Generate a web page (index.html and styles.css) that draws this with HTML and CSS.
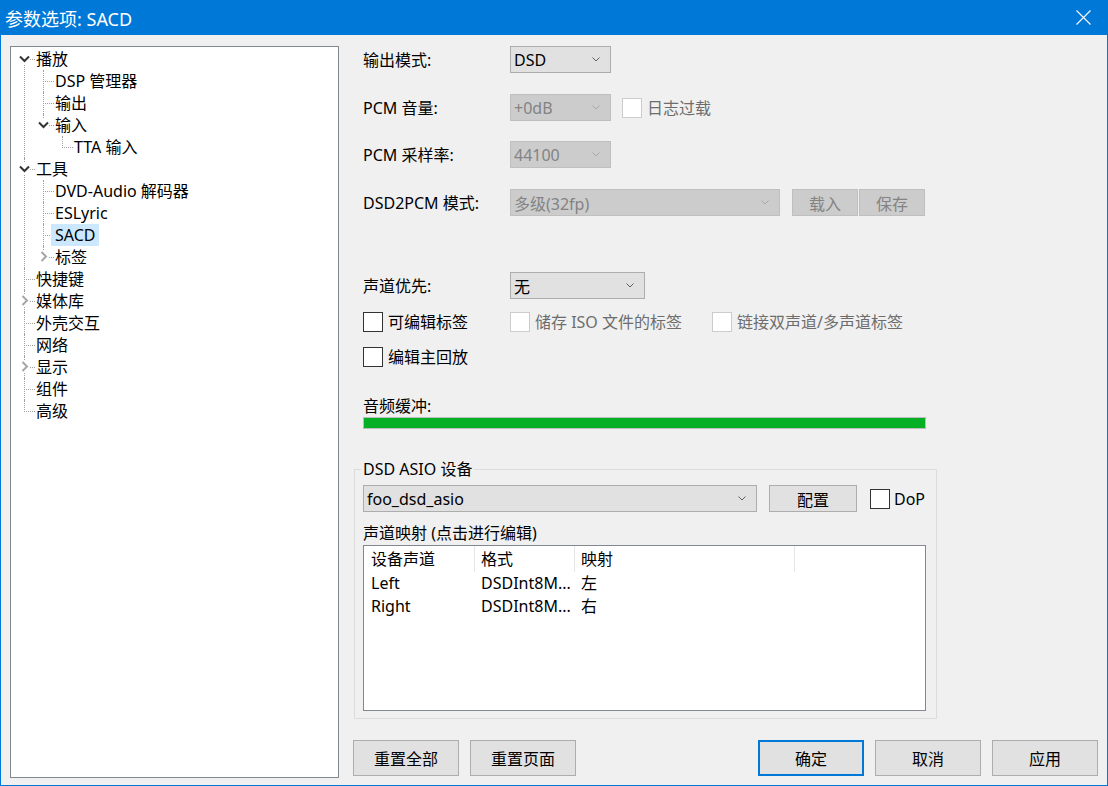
FILE: index.html
```html
<!DOCTYPE html>
<html lang="zh-CN">
  <head>
    <meta charset="UTF-8">
    <title>参数选项: SACD</title>
    <link rel="stylesheet" href="styles.css">
  </head>
  <body>
    <div class="window">
      <div class="titlebar">
        <span class="title">参数选项: SACD</span>
        <svg class="close" width="15" height="15" viewBox="0 0 15 15"><path d="M0.5 0.5L14.5 14.5M14.5 0.5L0.5 14.5" stroke="#fff" stroke-width="1.1"/></svg>
      </div>

      <div class="main">
        <!-- 左侧树 -->
        <div class="tree">
          <ul class="tree-root">
            <li>
              <div class="node"><span class="twisty"><svg width="11" height="11" viewBox="0 0 11 11"><path d="M1 3.5L5.5 8L10 3.5" class="open"/></svg></span><span class="label">播放</span></div>
              <ul>
                <li><div class="node"><span class="label">DSP 管理器</span></div></li>
                <li><div class="node"><span class="label">输出</span></div></li>
                <li>
                  <div class="node"><span class="twisty"><svg width="11" height="11" viewBox="0 0 11 11"><path d="M1 3.5L5.5 8L10 3.5" class="open"/></svg></span><span class="label">输入</span></div>
                  <ul>
                    <li><div class="node"><span class="label">TTA 输入</span></div></li>
                  </ul>
                </li>
              </ul>
            </li>
            <li>
              <div class="node"><span class="twisty"><svg width="11" height="11" viewBox="0 0 11 11"><path d="M1 3.5L5.5 8L10 3.5" class="open"/></svg></span><span class="label">工具</span></div>
              <ul>
                <li><div class="node"><span class="label">DVD-Audio 解码器</span></div></li>
                <li><div class="node"><span class="label">ESLyric</span></div></li>
                <li><div class="node"><span class="label selected">SACD</span></div></li>
                <li><div class="node"><span class="twisty"><svg width="11" height="11" viewBox="0 0 11 11"><path d="M3.5 1L8 5.5L3.5 10" class="closed"/></svg></span><span class="label">标签</span></div></li>
              </ul>
            </li>
            <li><div class="node"><span class="label">快捷键</span></div></li>
            <li><div class="node"><span class="twisty"><svg width="11" height="11" viewBox="0 0 11 11"><path d="M3.5 1L8 5.5L3.5 10" class="closed"/></svg></span><span class="label">媒体库</span></div></li>
            <li><div class="node"><span class="label">外壳交互</span></div></li>
            <li><div class="node"><span class="label">网络</span></div></li>
            <li><div class="node"><span class="twisty"><svg width="11" height="11" viewBox="0 0 11 11"><path d="M3.5 1L8 5.5L3.5 10" class="closed"/></svg></span><span class="label">显示</span></div></li>
            <li><div class="node"><span class="label">组件</span></div></li>
            <li><div class="node"><span class="label">高级</span></div></li>
          </ul>
        </div>

        <!-- 右侧设置页 -->
        <div class="pane">
          <div class="field">
            <span class="field-label">输出模式:</span>
            <div class="combo w-101"><span>DSD</span><svg class="arrow" width="8" height="5" viewBox="0 0 8 5"><path d="M0.5 0.5L4 4L7.5 0.5"/></svg></div>
          </div>
          <div class="field mt-21">
            <span class="field-label">PCM 音量:</span>
            <div class="combo w-101 disabled"><span>+0dB</span><svg class="arrow" width="8" height="5" viewBox="0 0 8 5"><path d="M0.5 0.5L4 4L7.5 0.5"/></svg></div>
            <label class="check disabled ml-11"><span class="box"></span>日志过载</label>
          </div>
          <div class="field mt-20">
            <span class="field-label">PCM 采样率:</span>
            <div class="combo w-101 disabled"><span>44100</span><svg class="arrow" width="8" height="5" viewBox="0 0 8 5"><path d="M0.5 0.5L4 4L7.5 0.5"/></svg></div>
          </div>
          <div class="field mt-21">
            <span class="field-label">DSD2PCM 模式:</span>
            <div class="combo w-270 disabled"><span>多级(32fp)</span><svg class="arrow" width="8" height="5" viewBox="0 0 8 5"><path d="M0.5 0.5L4 4L7.5 0.5"/></svg></div>
            <div class="btn-pair">
              <button class="btn small disabled">载入</button>
              <button class="btn small disabled">保存</button>
            </div>
          </div>

          <div class="field mt-56">
            <span class="field-label">声道优先:</span>
            <div class="combo w-135"><span>无</span><svg class="arrow" width="8" height="5" viewBox="0 0 8 5"><path d="M0.5 0.5L4 4L7.5 0.5"/></svg></div>
          </div>
          <div class="checks mt-13">
            <label class="check w-147"><span class="box"></span>可编辑标签</label>
            <label class="check w-202 disabled"><span class="box"></span>储存 ISO 文件的标签</label>
            <label class="check disabled"><span class="box"></span>链接双声道/多声道标签</label>
          </div>
          <div class="checks mt-15">
            <label class="check"><span class="box"></span>编辑主回放</label>
          </div>

          <div class="caption mt-28">音频缓冲:</div>
          <div class="progress"><div class="progress-fill"></div></div>

          <fieldset class="group">
            <legend>DSD ASIO 设备</legend>
            <div class="asio-row">
              <div class="combo w-394"><span>foo_dsd_asio</span><svg class="arrow" width="8" height="5" viewBox="0 0 8 5"><path d="M0.5 0.5L4 4L7.5 0.5"/></svg></div>
              <button class="btn config">配置</button>
              <label class="check dop"><span class="box"></span>DoP</label>
            </div>
            <div class="map-label">声道映射 (点击进行编辑)</div>
            <div class="list">
              <div class="list-head">
                <span>设备声道</span>
                <span>格式</span>
                <span>映射</span>
                <span></span>
              </div>
              <div class="list-row">
                <span>Left</span>
                <span>DSDInt8M...</span>
                <span>左</span>
              </div>
              <div class="list-row">
                <span>Right</span>
                <span>DSDInt8M...</span>
                <span>右</span>
              </div>
            </div>
          </fieldset>

          <div class="actions">
            <div class="btn-group">
              <button class="btn">重置全部</button>
              <button class="btn">重置页面</button>
            </div>
            <div class="btn-group">
              <button class="btn default">确定</button>
              <button class="btn">取消</button>
              <button class="btn">应用</button>
            </div>
          </div>
        </div>
      </div>
    </div>
  </body>
</html>
```

FILE: styles.css
```css
* {
  margin: 0;
  padding: 0;
  box-sizing: border-box;
}

body {
  width: 1108px;
  height: 786px;
  overflow: hidden;
  background: #f0f0f0;
  font-family: "Noto Sans", "Noto Sans CJK SC", sans-serif;
  font-size: 16px;
  color: #000;
}

.window {
  height: 786px;
  border: 1px solid #0078d7;
  border-top: 0;
  display: flex;
  flex-direction: column;
}

.titlebar {
  height: 35px;
  margin: 0 -1px;
  padding: 0 17px 0 5px;
  background: #0078d7;
  color: #fff;
  font-size: 18px;
  display: flex;
  align-items: center;
  justify-content: space-between;
}

.close {
  display: block;
}

.main {
  flex: 1;
  display: flex;
  padding: 11px 9px 0 9px;
}

/* 树 */
.tree {
  width: 329px;
  height: 732px;
  padding-top: 1px;
  background: #fff;
  border: 1px solid #828790;
}

.tree ul {
  list-style: none;
}

.tree ul ul {
  margin-left: 19px;
}

.tree li {
  position: relative;
}

.tree li::before {
  content: "";
  position: absolute;
  left: 13px;
  top: 0;
  width: 10px;
  height: 11px;
  border-left: 1px dotted #a0a0a0;
  border-bottom: 1px dotted #a0a0a0;
}

.tree li::after {
  content: "";
  position: absolute;
  left: 13px;
  top: 11px;
  bottom: 0;
  border-left: 1px dotted #a0a0a0;
}

.tree li:last-child::after {
  display: none;
}

.tree-root > li:first-child::before {
  border-left-color: transparent;
}

.node {
  position: relative;
  z-index: 1;
  height: 22px;
  line-height: 22px;
  padding-left: 21px;
  display: flex;
  align-items: center;
}

.label {
  padding: 0 4px;
  height: 22px;
  white-space: nowrap;
}

.label.selected {
  background: #cce8ff;
}

.twisty {
  position: absolute;
  left: 8px;
  top: 5px;
  width: 11px;
  height: 11px;
  background: #fff;
}

.twisty svg {
  display: block;
}

.twisty path {
  fill: none;
  stroke-width: 2;
}

.twisty .open {
  stroke: #333;
}

.twisty .closed {
  stroke: #a6a6a6;
}

/* 右侧 */
.pane {
  width: 744px;
  margin-left: 15px;
  display: flex;
  flex-direction: column;
}

.field {
  display: flex;
  align-items: center;
  padding-left: 9px;
}

.field-label {
  width: 147px;
  line-height: 22px;
  white-space: nowrap;
}

.mt-13 { margin-top: 13px; }
.mt-15 { margin-top: 15px; }
.mt-20 { margin-top: 20px; }
.mt-21 { margin-top: 21px; }
.mt-28 { margin-top: 28px; }
.mt-56 { margin-top: 56px; }
.ml-11 { margin-left: 11px; }

.combo {
  height: 27px;
  padding: 0 10px 0 3px;
  background: #e1e1e1;
  border: 1px solid #adadad;
  display: flex;
  align-items: center;
  justify-content: space-between;
  white-space: nowrap;
}

.combo .arrow {
  display: block;
}

.combo .arrow path {
  fill: none;
  stroke: #606060;
  stroke-width: 1;
}

.combo.disabled {
  background: #cccccc;
  border-color: #bfbfbf;
  color: #838383;
}

.combo.disabled .arrow path {
  stroke: #a8a8a8;
}

.w-101 { width: 101px; }
.w-135 { width: 135px; }
.w-270 { width: 270px; }
.w-394 { width: 394px; }
.w-147 { width: 147px; }
.w-202 { width: 202px; }

.btn {
  width: 106px;
  height: 36px;
  font: inherit;
  color: #000;
  background: #e1e1e1;
  border: 1px solid #adadad;
}

.btn.default {
  border: 2px solid #0078d7;
}

.btn.disabled {
  background: #cccccc;
  border-color: #bfbfbf;
  color: #838383;
}

.btn-pair {
  display: flex;
  gap: 1px;
  margin-left: 12px;
}

.btn.small {
  width: 66px;
  height: 27px;
}

.checks {
  display: flex;
  align-items: center;
  padding-left: 9px;
}

.check {
  display: flex;
  align-items: center;
  gap: 5px;
  height: 20px;
  line-height: 20px;
  white-space: nowrap;
}

.check .box {
  width: 20px;
  height: 20px;
  background: #fff;
  border: 1px solid #333;
}

.check.disabled {
  color: #6d6d6d;
}

.check.disabled .box {
  border-color: #cccccc;
}

.caption {
  padding-left: 9px;
  line-height: 22px;
}

.progress {
  margin-left: 9px;
  width: 563px;
  height: 12px;
  background: #e6e6e6;
  border: 1px solid #bcbcbc;
}

.progress-fill {
  width: 100%;
  height: 100%;
  background: #06b025;
}

/* 分组框 */
.group {
  margin-top: 30px;
  width: 583px;
  padding: 0 10px 7px 8px;
  border: 1px solid #dcdcdc;
}

.group legend {
  line-height: 20px;
  padding: 0 2px;
  margin-left: -2px;
}

.asio-row {
  display: flex;
  align-items: center;
  margin-top: 6px;
}

.btn.config {
  width: 88px;
  height: 27px;
  margin-left: 12px;
}

.check.dop {
  margin-left: 13px;
  gap: 4px;
}

.map-label {
  margin-top: 10px;
  line-height: 22px;
}

.list {
  margin-top: 1px;
  width: 563px;
  height: 166px;
  background: #fff;
  border: 1px solid #828790;
}

.list-head,
.list-row {
  display: grid;
  grid-template-columns: 111px 100px 220px 1fr;
}

.list-head span {
  height: 26px;
  line-height: 26px;
  padding-left: 6px;
  border-right: 1px solid #e5e5e5;
}

.list-head span:first-child,
.list-row span:first-child {
  padding-left: 7px;
}

.list-head span:last-child {
  border-right: 0;
}

.list-row span {
  height: 23px;
  line-height: 23px;
  padding-left: 6px;
  white-space: nowrap;
}

.actions {
  margin-top: 21px;
  margin-left: -1px;
  display: flex;
  justify-content: space-between;
}

.btn-group {
  display: flex;
  gap: 11px;
}
```
